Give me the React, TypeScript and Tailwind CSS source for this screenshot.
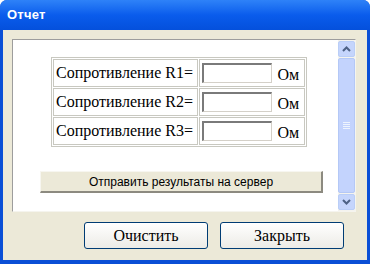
export default function App() {
  const rows = ["Сопротивление R1=", "Сопротивление R2=", "Сопротивление R3="]

  return (
    <div className="w-[370px] h-[264px] flex flex-col bg-[#0A4FD6] rounded-t-[7px] overflow-hidden">
      <div className="h-[30px] shrink-0 flex items-center px-[7px] bg-gradient-to-b from-[#2E82F8] via-[#0A5CEC] to-[#0450DC]">
        <span className="text-white text-[13px] font-bold font-['Liberation_Sans',sans-serif] tracking-[0.2px]">Отчет</span>
      </div>
      <div className="flex-1 mx-[3px] mb-[4px] bg-[#ECE9D8] flex flex-col">
        <div className="mt-[9px] ml-[9px] mr-[11px] h-[173px] flex border-t border-l border-[#9D9D9D] border-r border-b border-r-[#F5F4EE] border-b-[#F5F4EE] bg-white">
          <div className="flex-1 flex flex-col">
            <table className="ml-[38px] mt-[17px] w-[256px] border border-[#C8C8C0] border-separate border-spacing-[1px] font-['Liberation_Serif',serif] text-[16px] text-black">
              <tbody>
                {rows.map((label) => (
                  <tr key={label}>
                    <td className="border border-[#C8C8C0] h-[28px] px-[2px] whitespace-nowrap">{label}</td>
                    <td className="border border-[#C8C8C0] h-[28px] pl-[2px] pr-[3px] whitespace-nowrap">
                      <div className="flex items-end gap-[5px]">
                        <div className="w-[70px] h-[20px] border-t-2 border-l-2 border-[#7A7A7A] border-r border-b border-r-[#D4D0C8] border-b-[#D4D0C8] bg-white" />
                        <span className="leading-[17px]">Ом</span>
                      </div>
                    </td>
                  </tr>
                ))}
              </tbody>
            </table>
            <button className="ml-[27px] mt-[24px] w-[283px] h-[22px] bg-[#ECE9D8] border-t border-l border-t-[#F7F6F0] border-l-[#F7F6F0] border-r-2 border-b-2 border-r-[#8C8A80] border-b-[#8C8A80] text-[12px] font-['Liberation_Sans',sans-serif] text-black">
              Отправить результаты на сервер
            </button>
          </div>
          <div className="w-[17px] flex flex-col py-[1px] bg-[#F4F3EE]">
            <div className="h-[16px] flex items-center justify-center rounded-[2px] border border-[#BACEF7] bg-[#C5D5FC]">
              <svg width="9" height="6" viewBox="0 0 9 6"><path d="M1 5 L4.5 1.5 L8 5" stroke="#4D6185" strokeWidth="2" fill="none" /></svg>
            </div>
            <div className="flex-1 my-[1px] rounded-[2px] border border-[#B4C8F6] bg-[#C3D3FD] flex items-center justify-center">
              <div className="flex flex-col gap-[1px]">
                <div className="w-[7px] h-[1px] bg-[#EEF4FE]" />
                <div className="w-[7px] h-[1px] bg-[#EEF4FE]" />
                <div className="w-[7px] h-[1px] bg-[#EEF4FE]" />
                <div className="w-[7px] h-[1px] bg-[#EEF4FE]" />
              </div>
            </div>
            <div className="h-[16px] flex items-center justify-center rounded-[2px] border border-[#BACEF7] bg-[#C5D5FC]">
              <svg width="9" height="6" viewBox="0 0 9 6"><path d="M1 1 L4.5 4.5 L8 1" stroke="#4D6185" strokeWidth="2" fill="none" /></svg>
            </div>
          </div>
        </div>
        <div className="mt-[10px] flex justify-end gap-[12px] pr-[23px]">
          {["Очистить", "Закрыть"].map((t) => (
            <button key={t} className="w-[124px] h-[27px] rounded-[3px] border border-[#003C74] bg-gradient-to-b from-white to-[#ECEBE6] font-['Liberation_Serif',serif] text-[16px] text-black">
              {t}
            </button>
          ))}
        </div>
      </div>
    </div>
  )
}
